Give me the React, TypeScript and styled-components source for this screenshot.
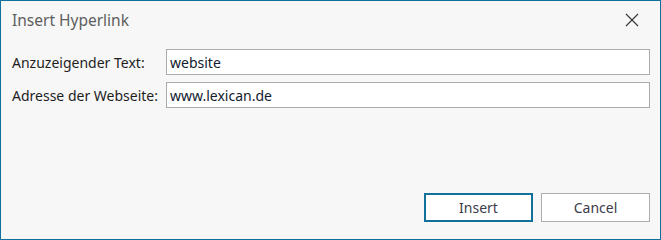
import { createGlobalStyle, styled } from "styled-components";

const GlobalStyle = createGlobalStyle`
  html, body {
    margin: 0;
    padding: 0;
    background: #f7f7f7;
  }
  body {
    font-family: "Noto Sans", "Open Sans", sans-serif;
  }
`;

const accent = "#12719a";

const Dialog = styled.div`
  box-sizing: border-box;
  width: 661px;
  height: 240px;
  border: 1px solid ${accent};
  background: #f7f7f7;
  display: flex;
  flex-direction: column;
`;

const TitleBar = styled.div`
  height: 38px;
  display: flex;
  align-items: center;
  justify-content: space-between;
  padding: 0 21px 0 11px;
`;

const Title = styled.div`
  font-size: 15.5px;
  color: #5e5e5e;
`;

const CloseButton = styled.button`
  border: none;
  background: transparent;
  padding: 0;
  width: 14px;
  height: 14px;
  display: flex;
  align-items: center;
  justify-content: center;
  cursor: pointer;
`;

const Form = styled.div`
  display: grid;
  grid-template-columns: 154px 1fr;
  row-gap: 7px;
  align-items: center;
  padding: 10px 10px 0 11px;
`;

const Label = styled.label`
  font-size: 14px;
  color: #1e1e1e;
`;

const Field = styled.input`
  box-sizing: border-box;
  height: 26px;
  width: 100%;
  border: 1px solid #ababab;
  background: #fff;
  padding: 0 4px 0 3px;
  font-family: inherit;
  font-size: 14px;
  color: #111a2e;
  outline: none;
`;

const Footer = styled.div`
  margin-top: auto;
  display: flex;
  justify-content: flex-end;
  gap: 8px;
  padding: 0 10px 17px 0;
`;

const Button = styled.button<{ $primary?: boolean }>`
  box-sizing: border-box;
  width: 109px;
  height: 29px;
  background: #fff;
  border: ${(p) => (p.$primary ? `2px solid ${accent}` : "1px solid #adadad")};
  font-family: inherit;
  font-size: 14px;
  color: #3c3c4a;
  cursor: pointer;
`;

export default function App() {
  return (
    <>
      <GlobalStyle />
      <Dialog>
        <TitleBar>
          <Title>Insert Hyperlink</Title>
          <CloseButton aria-label="Close">
            <svg width="14" height="14" viewBox="0 0 14 14">
              <path d="M1 1L13 13M13 1L1 13" stroke="#3a3a3a" strokeWidth="1.2" />
            </svg>
          </CloseButton>
        </TitleBar>
        <Form>
          <Label>Anzuzeigender Text:</Label>
          <Field defaultValue="website" />
          <Label>Adresse der Webseite:</Label>
          <Field defaultValue="www.lexican.de" />
        </Form>
        <Footer>
          <Button $primary>Insert</Button>
          <Button>Cancel</Button>
        </Footer>
      </Dialog>
    </>
  );
}
